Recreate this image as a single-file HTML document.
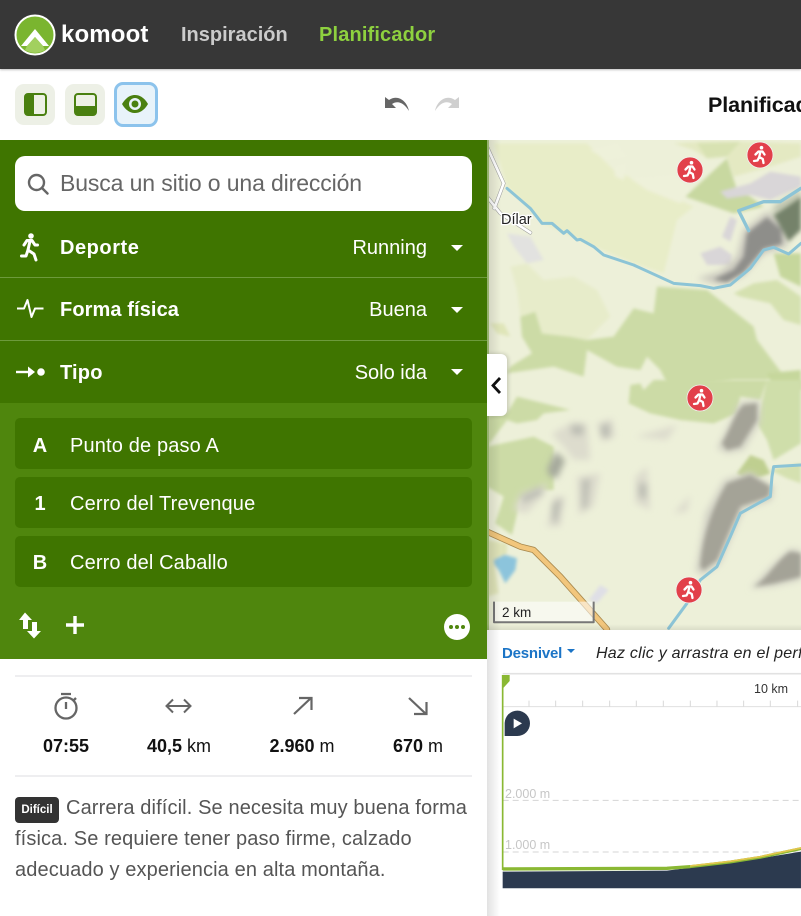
<!DOCTYPE html>
<html><head><meta charset="utf-8"><title>komoot</title>
<style>
html,body{margin:0;padding:0;width:801px;height:916px;overflow:hidden;background:#fff;font-family:"Liberation Sans",sans-serif}
.a{position:absolute}
.t{position:absolute;white-space:nowrap;line-height:30px;height:30px}
.b{font-weight:700}
.w{color:#fff}
.r{text-align:right}
.c{text-align:center}
svg{display:block}
</style></head><body>
<div style="position:relative;width:801px;height:916px;overflow:hidden">

<!-- MAP -->
<svg class="a" style="left:487px;top:140px" width="314" height="490" viewBox="0 0 314 490">
<defs><filter id="bl" filterUnits="userSpaceOnUse" x="-60" y="-60" width="1100" height="900"><feGaussianBlur stdDeviation="5"/></filter>
<filter id="bl2" filterUnits="userSpaceOnUse" x="-60" y="-60" width="1100" height="900"><feGaussianBlur stdDeviation="10"/></filter>
<filter id="bl3" filterUnits="userSpaceOnUse" x="-60" y="-60" width="1100" height="900"><feGaussianBlur stdDeviation="6"/></filter>
<g id="run"><circle r="13" fill="#e2404a" stroke="#f2f2f2" stroke-width=".8"/><g fill="none" stroke="#fff" stroke-width="2.300" stroke-linecap="round" stroke-linejoin="round"><path d="M.5-3.500L-.8 2M-4.500-.5L-1.500-3.500L2.500-3.500L4.500-.5M-.8 2L2.800 4L3.500 8M-.8 2L-2.500 5.500L-6 6"/></g><circle cx="1.500" cy="-7.300" r="1.800" fill="#fff"/></g></defs>
<rect width="314" height="490" fill="#edf0d9"/>
<g transform="scale(.3333)" filter="url(#bl)">
<path d="M20 10L300 10L380 90L620 200L570 240L530 400L440 370L320 320L170 250L60 140Z" fill="#e8edc8"/>
<path d="M310 30L390 10L420 50L360 60Z M380 80L420 70L410 120L385 110Z M430 115L560 105L610 150L580 190L480 150Z" fill="#eef1da"/>
<path d="M560 10L640 5L760 5L942 10L942 50L850 80L740 110L720 50L660 55L620 30Z" fill="#e4e9c2"/>
<path d="M630 10L760 5L720 50L660 55Z" fill="#d8e2b2"/>
<path d="M595 170L720 55L750 150L790 170L830 200L740 220Z" fill="#c8d8a0"/>
<path d="M100 530L145 515L165 580L250 590L300 600L380 590L440 505L500 520L510 440L660 450L800 560L810 600L885 700L840 720L740 720L550 750L520 690L480 650L460 690L390 680L300 630L290 710L260 700L200 680L60 700L70 680L135 640L105 590Z" fill="#ccdba6"/>
<path d="M70 380L120 370L170 420L260 410L330 450L370 530L300 600L250 590L165 580L145 515L100 530L90 450Z" fill="#e7ecca"/>
<path d="M10 550L50 550L70 590L30 580Z" fill="#dfe5b8"/>
<path d="M740 460L800 430L870 420L942 470L942 555L890 540L850 490L760 470Z" fill="#d5e1b0"/>
<path d="M860 340L942 340L942 440L880 410Z" fill="#c6d79c"/>
<path d="M840 700L942 690L942 750L860 750Z" fill="#c6d79c"/>
<path d="M700 155L790 130L850 95L942 110L942 140L850 180L790 165L720 175Z" fill="#d9d6d8"/>
<path d="M640 340L700 320L735 345L730 375L660 375Z M705 290L730 230L750 240L730 305Z" fill="#d9d6d8"/>
<path d="M60 280L130 290L170 360L120 370L80 320Z" fill="#e2e2e0"/>
</g>
<g transform="scale(.3333)" filter="url(#bl2)">
<path d="M630 415L700 395L750 350L770 270L840 215L900 250L900 320L830 340L770 405L700 435Z" fill="#c9c7bd"/>
<path d="M860 200L942 150L942 170L860 225Z" fill="#b4baa5"/>
</g>
<g transform="scale(.3333)" filter="url(#bl3)">
<path d="M680 418L740 390L770 350L780 280L840 232L882 268L885 312L830 326L770 397L720 427Z" fill="#8e8e8a"/>
<path d="M860 225L942 170L942 270L905 305Z" fill="#75826a"/>
</g>
<g transform="scale(.3333)" fill="none" stroke-linejoin="round" stroke-linecap="round">
<path d="M0 20L50 130L22 205M0 170L40 220L130 278" stroke="#9a9a9a" stroke-width="11"/>
<path d="M0 20L50 130L22 205M0 170L40 220L130 278" stroke="#fff" stroke-width="8"/>
<path d="M60 145L130 205L165 250L195 250L230 280L240 272L270 300L280 298L320 320L350 345L440 375L560 430L640 437L680 445L730 435L790 385L830 330L860 322L905 342L942 310" stroke="#8cc4d6" stroke-width="9"/>
<path d="M942 145L880 185L830 185L755 212L785 272" stroke="#8cc4d6" stroke-width="10"/>
</g>
<g transform="translate(0,240) scale(.3333)" filter="url(#bl)">
<path d="M430 15L460 10L470 30L500 0L840 0L820 60L760 50L750 100L680 130L580 120L490 100L425 70Z" fill="#ccdba6"/>
<path d="M0 105L60 100L90 50L250 90L170 100L150 120L90 130L60 120L0 200L140 170L200 200L200 330L150 330L100 360L75 465L25 430L50 350L0 320Z" fill="#ccdba6"/>
<path d="M810 130L840 0L942 0L942 190L860 240L840 180Z" fill="#cfdeaa"/>
<path d="M750 280L790 225L830 240L850 280L810 295L770 295Z" fill="#bfcf90"/>
<path d="M850 270L942 250L942 310L900 295Z" fill="#d5e1b0"/>
<path d="M8 535L40 520L90 535L85 570L55 610L35 570Z" fill="#8cc4dc"/>
<path d="M0 480L60 490L60 520L20 540L35 640L0 650Z" fill="#dfe3b8"/>
<path d="M305 660L340 615L365 630L330 670Z" fill="#dfdfe6"/>
</g>
<g transform="translate(0,240) scale(.3333)" filter="url(#bl2)">
<path d="M195 160L260 125L300 130L310 240L260 240L230 200L205 175Z M330 130L375 115L385 170L345 185Z M270 290L340 280L320 380L275 405Z M80 390L100 340L180 310L170 345L120 400ZM180 440L200 350L235 350L220 440Z M445 290L480 260L490 390L445 370Z M560 400L610 345L600 395Z M445 170L570 135L540 180Z" fill="#dddccd"/>
<path d="M180 270L205 215L235 240L210 295L190 290Z" fill="#a5a99b"/>
<path d="M100 350L160 320L170 340L110 370Z M195 370L225 355L210 430L195 420Z M285 300L310 295L300 385L285 385Z M455 310L480 310L478 360L455 350Z M340 135L370 130L368 175L342 170Z M250 135L290 135L290 165L255 165Z" fill="#bcbdb3"/>
<path d="M625 575L655 400L710 300L790 275L860 320L855 360L770 390L730 480L700 550L650 585Z M690 205L760 65L820 60L820 125L770 210L720 220Z M790 625L860 550L910 505L942 510L942 600L860 620Z" fill="#d2d2c5"/>
</g>
<g transform="translate(0,240) scale(.3333)" filter="url(#bl3)">
<path d="M705 190C730 150 745 95 770 75L810 70L810 120L760 200L720 210Z" fill="#a4a397"/>
<path d="M640 560C645 490 665 400 720 310L790 285L850 320L845 350L760 380L720 470L690 540L650 570Z" fill="#a4a397"/>
<path d="M800 620C840 600 870 540 910 515L942 520L942 590L860 610Z" fill="#a4a397"/>
</g>
<g transform="translate(0,240) scale(.3333)" fill="none" stroke-linejoin="round" stroke-linecap="round">
<path d="M545 745L600 670L640 600L690 560L730 470L760 400L850 350L855 290L860 260L942 255" stroke="#8cc4d6" stroke-width="9"/>
<path d="M0 455L100 500L140 510L220 590L300 680L360 748" stroke="#a98a4f" stroke-width="19"/>
<path d="M0 455L100 500L140 510L220 590L300 680L360 748" stroke="#f2c67c" stroke-width="14"/>
<rect x="20" y="665" width="300" height="60" fill="#fff" fill-opacity=".55" stroke="none"/>
<path d="M21 665V727H320V665" stroke="#777" stroke-width="6" stroke-linecap="butt"/>
</g>
<text x="15" y="477" font-family="Liberation Sans" font-size="13.5" fill="#222">2 km</text>
<text x="14" y="84" font-family="Liberation Sans" font-size="14.5" fill="#222" stroke="#fff" stroke-width="2.5" paint-order="stroke">Dílar</text>
<rect x="0" y="0" width="2" height="490" fill="#a9c77c"/>
<use href="#run" transform="translate(203,30)"/>
<use href="#run" transform="translate(273,15)"/>
<use href="#run" transform="translate(213,258)"/>
<use href="#run" transform="translate(202,450)"/>
</svg>
<div class="a" style="left:487px;top:140px;width:14px;height:490px;background:linear-gradient(90deg,rgba(0,0,0,.12),rgba(0,0,0,0))"></div>
<div class="a" style="left:487px;top:624px;width:314px;height:6px;background:linear-gradient(180deg,rgba(0,0,0,0),rgba(0,0,0,.08))"></div>

<!-- collapse tab -->
<div class="a" style="left:487px;top:354px;width:20px;height:62px;background:#fff;border-radius:0 6px 6px 0;box-shadow:1px 0 5px rgba(0,0,0,.2)"></div>
<svg class="a" style="left:487px;top:376px" width="20" height="20"><path d="M13 2L6 9.500L13 17" fill="none" stroke="#111" stroke-width="2.800"/></svg>

<!-- ELEVATION PANEL -->
<div class="a" style="left:487px;top:630px;width:314px;height:286px;background:#fff"></div>
<div class="a" style="left:487px;top:630px;width:13px;height:286px;background:linear-gradient(90deg,#e2e2e2,#fff)"></div>
<div class="t b" style="left:502px;top:637px;font-size:15px;color:#1b74c6;letter-spacing:-.2px;margin-top:2px">Desnivel</div>
<svg class="a" style="left:566px;top:648px" width="10" height="6"><path d="M1 1H9L5 5Z" fill="#1b74c6"/></svg>
<div class="t" style="left:596px;top:639px;font-size:16px;font-style:italic;color:#222;letter-spacing:.25px">Haz clic y arrastra en el perfil</div>
<svg class="a" style="left:487px;top:630px" width="314" height="286" viewBox="0 0 314 286">
<g transform="scale(.3333)" fill="none">
<path d="M47 131H942" stroke="#e2e2e2" stroke-width="5"/>
<path d="M47 230H942" stroke="#e0e0e0" stroke-width="3"/>
<path d="M126 212V230M206 212V230M287 212V230M368 212V230M448 212V230M529 212V230M610 212V230M690 212V230M770 212V230M850 212V230M932 212V230" stroke="#d8d8d8" stroke-width="3"/>
<path d="M47 511H942M47 666H942" stroke="#d5d5d5" stroke-width="3" stroke-dasharray="18 12"/>
<path d="M47 725L540 722L620 712L800 688L942 665V775H47Z" fill="#2c3a4f"/>
<path d="M47 717L540 715L610 710" stroke="#8ab833" stroke-width="10"/>
<path d="M610 710L730 696L820 682L942 656" stroke="#8ab833" stroke-width="9"/>
<path d="M610 708L730 694L820 680L942 654" stroke="#e3c64d" stroke-width="5"/>
<path d="M47 135V720" stroke="#8ab833" stroke-width="5"/>
<path d="M45 135H68V153L50 173H45Z" fill="#8ab833"/>
<path d="M53 318V279A38 38 0 1 1 91 318Z" fill="#2c3a4f"/>
<path d="M80 266L105 280L80 295Z" fill="#fff"/>
</g>
</svg>
<div class="t" style="left:754px;top:674px;font-size:12.500px;color:#333">10 km</div>
<div class="t" style="left:505px;top:779px;font-size:12.500px;color:#c6c6c6">2.000 m</div>
<div class="t" style="left:505px;top:830px;font-size:12.500px;color:#c6c6c6">1.000 m</div>

<!-- LEFT PANEL BG -->
<div class="a" style="left:0;top:659px;width:487px;height:257px;background:#fff"></div>
<div class="a" style="left:0;top:140px;width:487px;height:263px;background:#3f7500"></div>
<div class="a" style="left:0;top:403px;width:487px;height:256px;background:#4f860d"></div>

<!-- HEADER -->
<div class="a" style="left:0;top:0;width:801px;height:69px;background:#373737;box-shadow:0 1px 2px rgba(0,0,0,.25)"></div>
<svg class="a" style="left:14px;top:14px" width="42" height="42" viewBox="0 0 42 42">
<circle cx="21" cy="21" r="19.500" fill="#7ab52f" stroke="#fff" stroke-width="2"/>
<path d="M7 32L21 15L35 32L29 32L21 23L13 32Z" fill="#fff"/>
<path d="M13 32L21 23L29 32L31 36A19 19 0 0 1 11 36Z" fill="#a2d05f"/>
</svg>
<div class="t b w" style="left:61px;top:20px;font-size:24px;letter-spacing:.15px">komoot</div>
<div class="t b" style="left:181px;top:20px;font-size:20px;color:#cbcbcb">Inspiración</div>
<div class="t b" style="left:319px;top:20px;font-size:20px;color:#8ed13f;letter-spacing:.15px">Planificador</div>

<!-- TOOLBAR -->
<div class="a" style="left:15px;top:84px;width:40px;height:41px;background:#edf0e6;border-radius:9px"></div>
<div class="a" style="left:65px;top:84px;width:40px;height:41px;background:#edf0e6;border-radius:9px"></div>
<div class="a" style="left:114px;top:82px;width:38px;height:39px;background:#e8f3fa;border-radius:9px;border:3px solid #8cc3ec"></div>
<svg class="a" style="left:24px;top:93px" width="23" height="23" viewBox="0 0 23 23"><rect x="1" y="1" width="21" height="21" rx="3" fill="#eef1e6" stroke="#4a8010" stroke-width="2"/><path d="M3 1H10V22H3A2 2 0 0 1 1 20V3A2 2 0 0 1 3 1Z" fill="#4a8010"/></svg>
<svg class="a" style="left:74px;top:93px" width="23" height="23" viewBox="0 0 23 23"><rect x="1" y="1" width="21" height="21" rx="3" fill="#eef1e6" stroke="#4a8010" stroke-width="2"/><path d="M1 13H22V20A2 2 0 0 1 20 22H3A2 2 0 0 1 1 20Z" fill="#4a8010"/></svg>
<svg class="a" style="left:121px;top:94px" width="28" height="20" viewBox="0 0 28 20"><path d="M1 10C5 3 10 1 14 1C18 1 23 3 27 10C23 17 18 19 14 19C10 19 5 17 1 10Z" fill="#4a8010"/><circle cx="14" cy="10" r="6" fill="#e8f3fa"/><circle cx="14" cy="10" r="3.500" fill="#4a8010"/></svg>
<svg class="a" style="left:383px;top:95px" width="28" height="18" viewBox="0 0 28 18"><path d="M2 2V13H13L9 9C15 5 21 8 26 16C24 6 15-1 6 5Z" fill="#666"/></svg>
<svg class="a" style="left:433px;top:95px" width="28" height="18" viewBox="0 0 28 18"><path d="M26 2V13H15L19 9C13 5 7 8 2 16C4 6 13-1 22 5Z" fill="#cfcfcf"/></svg>
<div class="t b" style="left:708px;top:90px;font-size:21.500px;color:#111;letter-spacing:-.1px">Planificador</div>

<!-- SEARCH -->
<div class="a" style="left:15px;top:156px;width:457px;height:55px;background:#fff;border-radius:10px"></div>
<svg class="a" style="left:27px;top:173px" width="22" height="22" viewBox="0 0 22 22"><circle cx="9.500" cy="9.500" r="7.500" fill="none" stroke="#666" stroke-width="2.400"/><path d="M15 15L20.500 20.500" stroke="#666" stroke-width="2.400" stroke-linecap="round"/></svg>
<div class="t" style="left:60px;top:168px;font-size:23px;color:#666;letter-spacing:-.12px">Busca un sitio o una dirección</div>

<!-- ROWS -->
<svg class="a" style="left:18px;top:232px" width="24" height="30" viewBox="0 0 24 30"><circle cx="13" cy="4" r="2.800" fill="#fff"/><g fill="none" stroke="#fff" stroke-width="3" stroke-linecap="round" stroke-linejoin="round"><path d="M12 9L10 18M6 13L9 8.500L14 8.500L17 13L19.500 13M10 18L16 22L18 28M10 18L8 24L3.500 24"/></g></svg>
<div class="t b w" style="left:60px;top:233px;font-size:20px;letter-spacing:.55px">Deporte</div>
<div class="t w r" style="right:374px;top:233px;font-size:20px">Running</div>
<svg class="a" style="left:451px;top:245px" width="12" height="6"><path d="M0 0H12L6 6Z" fill="#fff"/></svg>
<div class="a" style="left:0;top:277px;width:487px;height:1px;background:#6d9a3c"></div>

<svg class="a" style="left:17px;top:298px" width="27" height="22" viewBox="0 0 27 22"><path d="M0 10.500H7L10.500 2L14.500 19L18 10.500H26.500" fill="none" stroke="#fff" stroke-width="2" stroke-linejoin="round"/></svg>
<div class="t b w" style="left:60px;top:295px;font-size:20px;letter-spacing:.1px">Forma física</div>
<div class="t w r" style="right:374px;top:295px;font-size:20px">Buena</div>
<svg class="a" style="left:451px;top:307px" width="12" height="6"><path d="M0 0H12L6 6Z" fill="#fff"/></svg>
<div class="a" style="left:0;top:340px;width:487px;height:1px;background:#6d9a3c"></div>

<svg class="a" style="left:16px;top:363px" width="30" height="18" viewBox="0 0 30 18"><path d="M0 9H14" stroke="#fff" stroke-width="2.400"/><path d="M12 3.500L19 9L12 14.500Z" fill="#fff"/><circle cx="25" cy="9" r="3.800" fill="#fff"/></svg>
<div class="t b w" style="left:60px;top:358px;font-size:20px;letter-spacing:.2px">Tipo</div>
<div class="t w r" style="right:374px;top:358px;font-size:20px">Solo ida</div>
<svg class="a" style="left:451px;top:369px" width="12" height="6"><path d="M0 0H12L6 6Z" fill="#fff"/></svg>

<!-- WAYPOINTS -->
<div class="a" style="left:15px;top:418px;width:457px;height:51px;background:#3f7500;border-radius:5px"></div>
<div class="a" style="left:15px;top:477px;width:457px;height:51px;background:#3f7500;border-radius:5px"></div>
<div class="a" style="left:15px;top:536px;width:457px;height:51px;background:#3f7500;border-radius:5px"></div>
<div class="t b w c" style="left:20px;width:40px;top:431px;font-size:20px">A</div>
<div class="t w" style="left:70px;top:431px;font-size:20px;letter-spacing:.15px">Punto de paso A</div>
<div class="t b w c" style="left:20px;width:40px;top:489px;font-size:20px">1</div>
<div class="t w" style="left:70px;top:489px;font-size:20px;letter-spacing:.16px">Cerro del Trevenque</div>
<div class="t b w c" style="left:20px;width:40px;top:548px;font-size:20px">B</div>
<div class="t w" style="left:70px;top:548px;font-size:20px;letter-spacing:.13px">Cerro del Caballo</div>

<!-- ACTIONS -->
<svg class="a" style="left:18px;top:612px" width="24" height="27" viewBox="0 0 24 27"><path d="M7 0.500L14 8H10V17H5V8H1Z" fill="#fff"/><path d="M16 26.500L23 19H19V10H14V19H9Z" fill="#fff"/></svg>
<svg class="a" style="left:66px;top:616px" width="18" height="18"><path d="M9 0V18M0 9H18" stroke="#fff" stroke-width="3.400"/></svg>
<svg class="a" style="left:444px;top:614px" width="26" height="26"><circle cx="13" cy="13" r="13" fill="#fff"/><circle cx="7" cy="13" r="2" fill="#4f860d"/><circle cx="13" cy="13" r="2" fill="#4f860d"/><circle cx="19" cy="13" r="2" fill="#4f860d"/></svg>

<!-- STATS -->
<div class="a" style="left:15px;top:675px;width:457px;height:2px;background:#eeeef0"></div>
<div class="a" style="left:15px;top:775px;width:457px;height:2px;background:#eeeef0"></div>
<svg class="a" style="left:53px;top:692px" width="26" height="28" viewBox="0 0 26 28"><circle cx="13" cy="16" r="10.500" fill="none" stroke="#666" stroke-width="2.300"/><path d="M8 2H18M13 10V17M21 8L23 6" stroke="#666" stroke-width="2.300"/></svg>
<svg class="a" style="left:165px;top:696px" width="27" height="20" viewBox="0 0 27 20"><path d="M1.500 10H25.500M8 3.500L1.500 10L8 16.500M19 3.500L25.500 10L19 16.500" fill="none" stroke="#666" stroke-width="2"/></svg>
<svg class="a" style="left:292px;top:696px" width="22" height="20" viewBox="0 0 22 20"><path d="M2 18L19 2M7 2H19.500V14" fill="none" stroke="#666" stroke-width="2.200"/></svg>
<svg class="a" style="left:407px;top:696px" width="22" height="20" viewBox="0 0 22 20"><path d="M2 2L19 18M7 18H19.500V6" fill="none" stroke="#666" stroke-width="2.200"/></svg>
<div class="t c" style="left:16px;width:100px;top:731px;font-size:18px;color:#111"><span class="b">07:55</span></div>
<div class="t c" style="left:129px;width:100px;top:731px;font-size:18px;color:#111"><span class="b">40,5</span> km</div>
<div class="t c" style="left:252px;width:100px;top:731px;font-size:18px;color:#111"><span class="b">2.960</span> m</div>
<div class="t c" style="left:368px;width:100px;top:731px;font-size:18px;color:#111"><span class="b">670</span> m</div>

<!-- DESCRIPTION -->
<div class="a" style="left:15px;top:797px;width:44px;height:26px;background:#333;border-radius:4px;color:#fff;font-weight:700;font-size:11.500px;line-height:26px;text-align:center">Difícil</div>
<div class="t" style="left:66px;top:793px;font-size:20px;color:#555;letter-spacing:.12px">Carrera difícil. Se necesita muy buena forma</div>
<div class="t" style="left:15px;top:824px;font-size:20px;color:#555;letter-spacing:.12px">física. Se requiere tener paso firme, calzado</div>
<div class="t" style="left:15px;top:855px;font-size:20px;color:#555;letter-spacing:.12px">adecuado y experiencia en alta montaña.</div>
</div>
</body></html>
